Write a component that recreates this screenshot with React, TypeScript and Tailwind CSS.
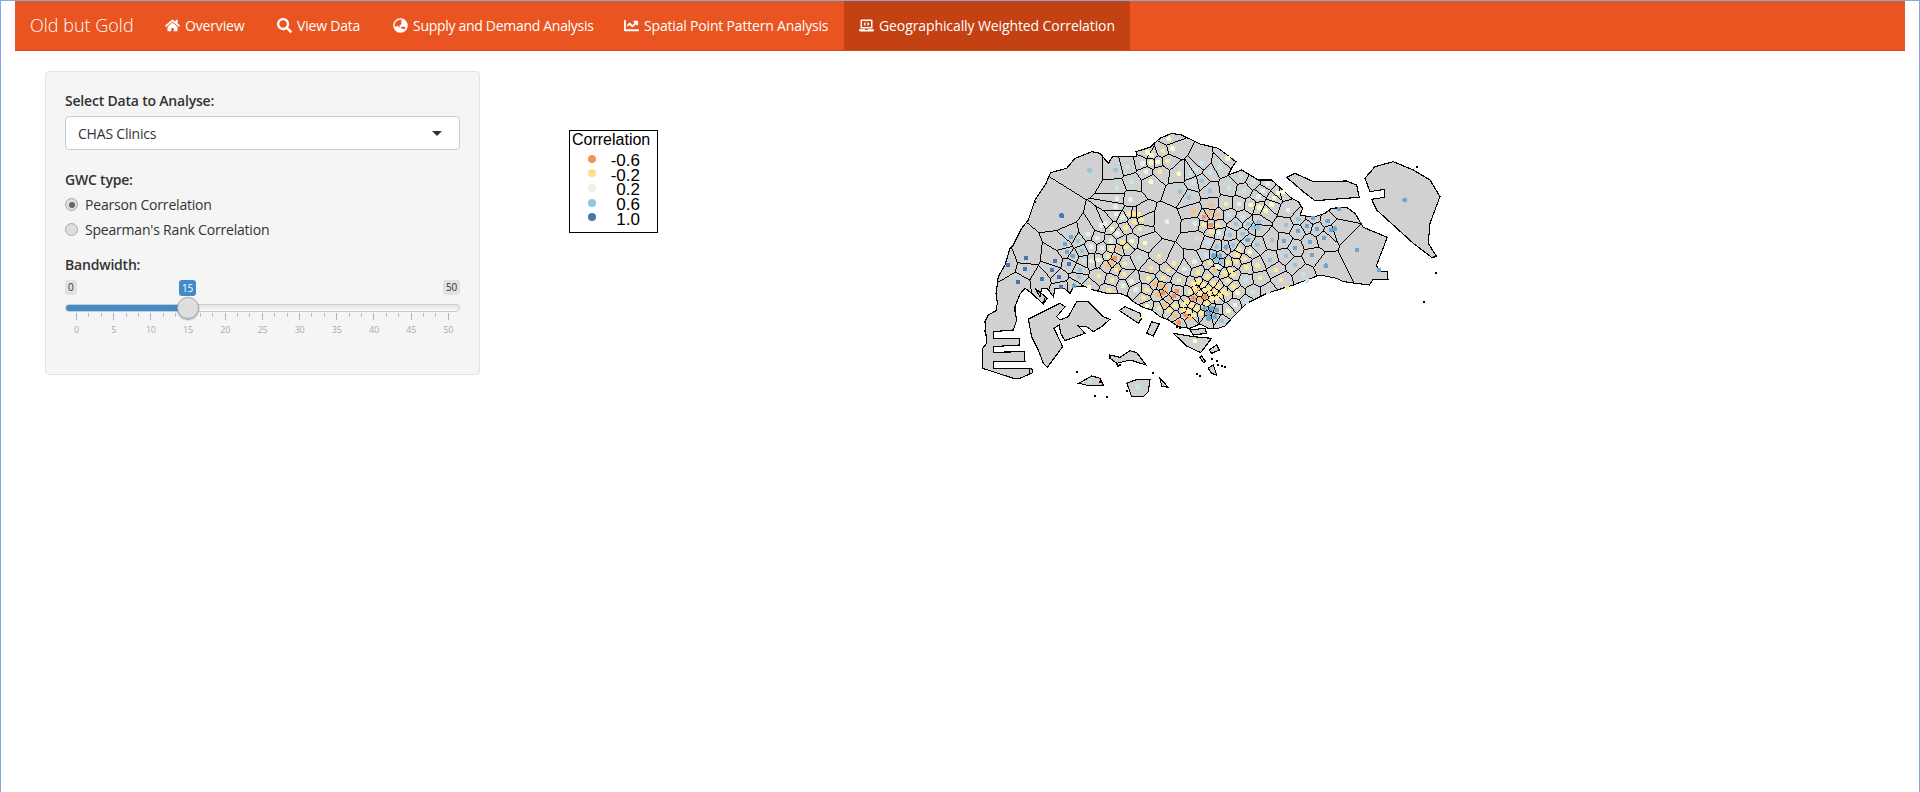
import { FaHome, FaSearch, FaGlobeAsia, FaChartLine, FaLaptopCode } from 'react-icons/fa'

const navItems = [
  { label: 'Overview', icon: FaHome, width: 'w-[112px]', tracking: 'tracking-[-0.15px]' },
  { label: 'View Data', icon: FaSearch, width: 'w-[116px]', tracking: 'tracking-[-0.2px]' },
  { label: 'Supply and Demand Analysis', icon: FaGlobeAsia, width: 'w-[231px]', tracking: 'tracking-[-0.3px]' },
  { label: 'Spatial Point Pattern Analysis', icon: FaChartLine, width: 'w-[235px]', tracking: 'tracking-[-0.18px]' },
  { label: 'Geographically Weighted Correlation', icon: FaLaptopCode, width: 'w-[286px]', tracking: 'tracking-[-0.1px]', active: true },
]

const land = [
  '75,605 85,585 108,572 112,550 108,520 115,470 135,435 150,385 160,375 185,325 205,300 225,240 258,190 272,158 320,145 345,115 395,95 420,100 445,130 458,110 530,110 528,95 570,82 600,55 635,40 665,45 720,72 775,85 828,125 815,145 805,165 845,150 895,180 935,180 995,235 1015,245 1028,265 1020,285 1060,292 1095,280 1115,265 1160,262 1185,280 1210,322 1282,352 1250,435 1255,455 1282,455 1284,478 1240,478 1228,495 1150,485 1130,475 1080,465 1000,495 920,520 860,550 820,590 795,618 775,625 745,625 720,612 690,625 655,620 625,600 600,590 575,570 545,560 520,545 505,530 485,522 440,520 400,510 370,498 340,500 330,520 312,505 285,505 280,530 262,505 245,505 240,530 225,505 262,535 250,552 215,520 195,505 180,522 165,560 165,575 170,600 160,630 100,635 100,655 178,655 178,675 100,680 100,697 193,695 195,725 100,725 100,745 215,745 218,758 180,775 160,775 68,745 68,685 80,670',
  '205,597 300,550 315,560 290,590 300,600 325,590 350,545 385,545 430,590 450,598 425,620 400,635 380,620 355,618 375,640 315,662 302,640 298,615 282,625 308,680 262,742 250,730 235,690 215,650',
  '980,172 1005,160 1060,185 1160,183 1190,195 1198,232 1065,242 1030,215',
  '1215,175 1245,140 1300,125 1360,150 1410,180 1440,230 1410,310 1405,370 1430,410 1415,412 1360,370 1250,270 1235,238 1273,232 1273,208 1230,215',
  '640,640 680,678 722,698 755,655 700,650',
  '690,630 735,625 740,640 700,645',
  '450,705 480,712 510,692 530,698 558,735 510,720 470,730 450,715',
  '357,790 395,768 420,775 430,795 390,798',
  '500,790 525,780 570,778 565,815 550,830 515,830 508,810',
  '600,775 625,802 605,798',
  '725,708 737,725 730,728 720,712',
  '748,690 770,675 778,690 755,700',
  '745,745 760,735 770,765 755,760',
  '478,572 495,560 540,580 545,595 535,610',
  '560,640 575,605 598,612 580,648',
]

const palette: Record<string, string> = {
  o: '#f88e54',
  a: '#fdbe72',
  y: '#fee89a',
  p: '#fcfcc4',
  g: '#e4f4e4',
  c: '#c5e4ef',
  b: '#94c5df',
  m: '#6fa4cf',
  d: '#4575b4',
}

const dots: Record<string, string> = {
  o: '732,291 752,315 651,513 609,519 642,528 657,608 677,585 464,414 735,530 700,535',
  a: '753,255 700,275 750,280 772,285 765,450 477,387 455,428 441,438 470,447 583,492 603,497 618,507 593,525 627,540 615,555 645,588 690,595 710,510 720,540',
  y: '608,93 623,123 600,155 798,252 731,315 755,335 773,315 507,280 522,282 537,282 545,300 522,306 497,323 540,327 487,366 453,385 499,381 444,408 495,432 468,450 417,468 456,480 492,462 448,510 566,475 610,474 657,480 560,510 551,534 597,564 670,570 645,557 628,572 750,428 805,428 830,405 853,417 828,425 893,437 860,443 812,452 795,460 597,408 642,430 573,444 624,450 714,457 742,470 820,465 803,483 820,500 838,388 948,450 900,474 963,480 981,504 700,490 715,485 730,495 745,505 760,490 775,500 790,515 800,522 690,515 705,505 720,520 735,510 750,520 765,515 780,525 755,535 770,535 740,550 680,545 695,555 710,565 670,555 685,575 700,585 725,580',
  p: '573,185 627,56 638,86 575,105 562,97 573,128 593,126 657,161 803,115 872,255 870,395 833,518 805,573 456,327 515,363 555,369 415,420 387,501 561,558 549,588 705,663 968,216 954,219 942,234 898,262 935,254 918,272',
  g: '621,305 512,239 471,236 467,260 548,130 558,155 837,252 895,230 705,310 777,338 773,440 703,425 673,447 393,380 412,354 383,342 423,316 437,310 468,282 488,292 472,340 453,362 426,385 395,423 490,497 514,484 527,508 825,555 984,270 908,213 922,190',
  c: '503,141 515,185 471,203 690,160 708,148 725,130 750,157 780,140 700,188 807,203 843,168 880,185 852,212 807,285 848,292 711,356 745,368 740,407 537,413 857,480 878,516 860,545 372,423 390,783 533,800 1029,462 1041,483 924,516',
  b: '389,152 467,150 725,183 660,215 687,232 750,212 828,312 865,312 880,323 895,323 810,345 848,342 771,380 819,376 892,375 770,420 783,425 354,363 366,393 360,450 357,471 785,603 1015,297 978,315 936,360 978,408 930,420 1005,435 896,306',
  m: '863,360 798,382 760,407 780,407 333,351 315,372 321,396 338,408 342,497 735,565 755,565 770,570 745,580 765,590 745,595 1059,294 1103,303 1137,267 1334,240 1191,390 1257,450 1098,437 1056,405 1005,384 1050,366 1071,327 1041,318 1014,333 1113,330 1125,326 1092,354 972,363',
  d: '305,287 285,423 198,414 144,435 195,447 276,450 327,432 297,471 246,477 174,486 303,501',
}

const specks = ['1428,459', '1392,546', '1372,140', '352,757', '580,760', '470,732', '480,735', '475,738', '405,827', '440,830', '755,718', '770,722', '785,738', '795,742', '775,735', '712,762', '720,767', '420,785', '500,812', '650,622', '660,625', '225,245', '75,632']

type Pt = [number, number]

const parsePts = (s: string): Pt[] => s.split(' ').map((p) => p.split(',').map(Number) as Pt)

const mainLand = parsePts(land[0])

function inside([x, y]: Pt, poly: Pt[]) {
  let hit = false
  for (let i = 0, j = poly.length - 1; i < poly.length; j = i++) {
    const [xi, yi] = poly[i]
    const [xj, yj] = poly[j]
    if (yi > y !== yj > y && x < ((xj - xi) * (y - yi)) / (yj - yi) + xi) hit = !hit
  }
  return hit
}

// subzone boundaries: each dot sits in its own cell, clipped to the island below
function cellFor(site: Pt, sites: Pt[]) {
  let cell: Pt[] = [[0, 0], [1500, 0], [1500, 900], [0, 900]]
  for (const other of sites) {
    if (other === site) continue
    const mx = (site[0] + other[0]) / 2
    const my = (site[1] + other[1]) / 2
    const nx = other[0] - site[0]
    const ny = other[1] - site[1]
    const side = (p: Pt) => (p[0] - mx) * nx + (p[1] - my) * ny
    const next: Pt[] = []
    cell.forEach((a, i) => {
      const b = cell[(i + 1) % cell.length]
      const sa = side(a)
      const sb = side(b)
      if (sa <= 0) next.push(a)
      if (sa < 0 !== sb < 0) {
        const t = sa / (sa - sb)
        next.push([a[0] + (b[0] - a[0]) * t, a[1] + (b[1] - a[1]) * t])
      }
    })
    cell = next
  }
  return cell.map((p) => p.join(',')).join(' ')
}

const sites = parsePts(Object.values(dots).join(' ')).filter((p) => inside(p, mainLand))
const cells = sites.map((s) => cellFor(s, sites))

const legendRows = [
  { label: '-0.6', color: '#f88e54', y: 159, textY: 166 },
  { label: '-0.2', color: '#fee090', y: 173, textY: 180.7 },
  { label: '0.2', color: '#e6f5e2', y: 188, textY: 195.4 },
  { label: '0.6', color: '#94c5df', y: 203, textY: 210 },
  { label: '1.0', color: '#4575b4', y: 217, textY: 224.7 },
]

function MapPlot() {
  return (
    <svg viewBox="560 120 900 300" className="ml-[80px] mt-[69px] h-[300px] w-[900px] shrink-0">
      <rect x="569.5" y="130.5" width="88" height="102" fill="#fff" stroke="#000" />
      <text x="572" y="145" fontSize="16" fontFamily="'Liberation Sans', sans-serif">Correlation</text>
      {legendRows.map((row) => (
        <g key={row.label}>
          <circle cx="592" cy={row.y} r="4" fill={row.color} />
          <text x="640" y={row.textY} textAnchor="end" fontSize="17" fontFamily="'Liberation Sans', sans-serif">
            {row.label}
          </text>
        </g>
      ))}
      <g transform="translate(960 120) scale(0.3333)" shapeRendering="crispEdges">
        <defs>
          <clipPath id="main-land">
            <polygon points={land[0]} />
          </clipPath>
        </defs>
        {land.map((pts) => (
          <polygon key={pts} points={pts} fill="#d1d1d1" stroke="#000" strokeWidth="3.4" />
        ))}
        <g clipPath="url(#main-land)">
          {cells.map((pts, i) => (
            <polygon key={i} points={pts} fill="none" stroke="#000" strokeWidth="3" />
          ))}
        </g>
        {specks.map((p) => {
          const [x, y] = p.split(',').map(Number)
          return <rect key={p} x={x - 3} y={y - 3} width="6" height="6" fill="#000" />
        })}
        {Object.entries(dots).map(([key, list]) =>
          parsePts(list).map(([x, y], i) => <circle key={key + i} cx={x} cy={y} r="7.5" fill={palette[key]} />)
        )}
      </g>
    </svg>
  )
}

function Slider() {
  const ticks = Array.from({ length: 31 }, (_, i) => i)
  const labels = Array.from({ length: 11 }, (_, i) => i * 5)

  return (
    <div className="relative mt-[5px] h-[58px]">
      <div className="flex justify-between text-[10px] leading-[15px] text-[#333]">
        <span className="rounded-[3px] bg-[#e1e1e1] px-[3px]">0</span>
        <span className="rounded-[3px] bg-[#e1e1e1] px-[3px]">50</span>
      </div>
      <span className="absolute left-[114px] top-0 rounded-[3px] bg-[#428bca] px-[3px] text-[10px] leading-[16px] text-white">15</span>
      <div className="mt-[9px] h-[8px] overflow-hidden rounded-full border border-[#ccc] bg-linear-to-b from-[#e4e4e4] to-[#fafafa]">
        <div className="-mt-px h-[8px] w-[125px] bg-[#428bca]" />
      </div>
      <div className="absolute left-[112px] top-[17px] h-[22px] w-[22px] rounded-full border border-[#aaa] bg-[#dedede] shadow-[0_1px_2px_rgba(0,0,0,0.3)]" />
      <div className="mx-[11px] mt-px flex h-[7px] items-start justify-between">
        {ticks.map((t) => (
          <div key={t} className={t % 3 === 0 ? 'h-[7px] w-px bg-[#8db9dc]' : 'h-[4px] w-px bg-[#bbb]'} />
        ))}
      </div>
      <div className="mx-[11px] mt-[4px] flex justify-between text-[9px] leading-[11px] text-[#a3adb5]">
        {labels.map((l) => (
          <span key={l} className="flex w-px justify-center">{l}</span>
        ))}
      </div>
    </div>
  )
}

function Radio({ label, checked }: { label: string; checked?: boolean }) {
  return (
    <div className="flex h-[25px] items-center gap-[7px]">
      <span className="flex h-[13px] w-[13px] items-center justify-center rounded-full border border-[#aaa] bg-[#dedede]">
        {checked && <span className="h-[6px] w-[6px] rounded-full bg-[#666]" />}
      </span>
      <span>{label}</span>
    </div>
  )
}

export default function App() {
  return (
    <div
      className="h-screen overflow-hidden border-x border-t border-[#84a9e0] bg-white text-[14px] text-[#333]"
      style={{ fontFamily: "'Open Sans', 'Noto Sans', sans-serif" }}
    >
      <nav className="mx-[14px] flex h-[50px] border-b border-[#d9481a] bg-[#e95420] text-white">
        <a className="flex w-[135px] items-center pl-[15px] text-[18px] font-light">Old but Gold</a>
        {navItems.map((item) => (
          <a
            key={item.label}
            className={`flex items-center gap-[5px] pl-[15px] ${item.tracking} ${item.width} ${item.active ? 'bg-[#c34113]' : ''}`}
          >
            <item.icon className="h-[15px] w-[15px]" />
            {item.label}
          </a>
        ))}
      </nav>
      <div className="flex items-start">
        <div className="ml-[44px] mt-[20px] h-[304px] w-[435px] shrink-0 rounded-[4px] border border-[#e3e3e3] bg-[#f5f5f5] px-[19px] pt-[19px] tracking-[-0.2px]">
          <div className="font-semibold leading-[20px]">Select Data to Analyse:</div>
          <div className="mt-[5px] flex h-[34px] items-center justify-between rounded-[4px] border border-[#ccc] bg-white pl-[12px] pr-[17px]">
            <span>CHAS Clinics</span>
            <span className="h-0 w-0 border-x-[5px] border-t-[5px] border-x-transparent border-t-[#333]" />
          </div>
          <div className="mt-[20px] font-semibold leading-[20px]">GWC type:</div>
          <div className="mt-[2px]">
            <Radio label="Pearson Correlation" checked />
            <Radio label="Spearman's Rank Correlation" />
          </div>
          <div className="mt-[13px] font-semibold leading-[20px]">Bandwidth:</div>
          <Slider />
        </div>
        <MapPlot />
      </div>
    </div>
  )
}
